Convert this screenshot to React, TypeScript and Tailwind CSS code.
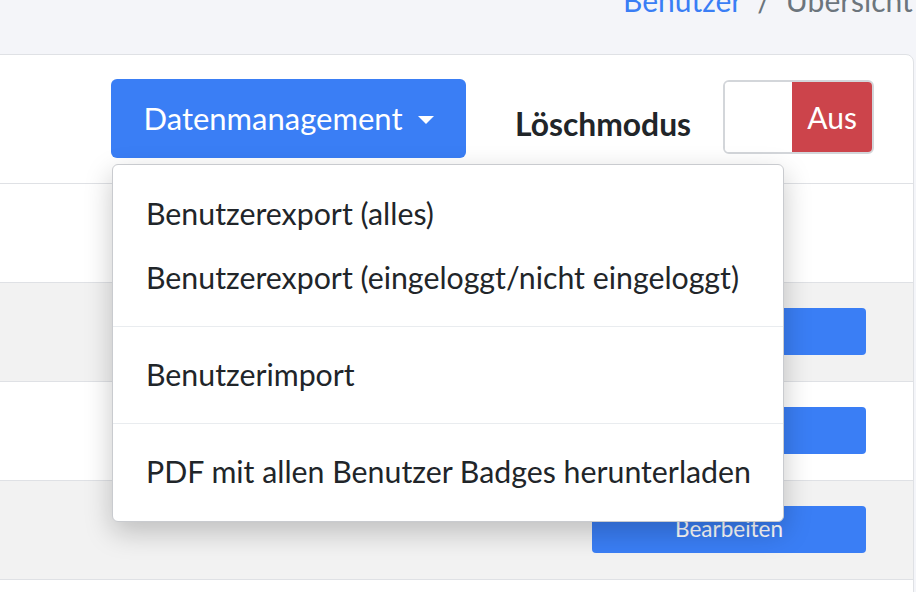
import { useState } from "react";

const rows = [
  { shaded: false, button: false },
  { shaded: true, button: true },
  { shaded: false, button: true },
  { shaded: true, button: true },
  { shaded: false, button: false },
];

const items = [
  ["Benutzerexport (alles)", "Benutzerexport (eingeloggt/nicht eingeloggt)"],
  ["Benutzerimport"],
  ["PDF mit allen Benutzer Badges herunterladen"],
];

export default function App() {
  const [open] = useState(true);

  return (
    <div
      className="relative h-[592px] w-[916px] overflow-hidden bg-[#f4f5f9] text-[#212529]"
      style={{ fontFamily: "Lato, 'Open Sans', sans-serif" }}
    >
      {/* Breadcrumb */}
      <div className="h-[54px] overflow-hidden">
        <div className="-mt-[20px] flex items-center gap-[15px] pl-[623px] text-[30px] leading-[40px] whitespace-nowrap">
          <span className="text-[#3a7ef5]">Benutzer</span>
          <span className="text-[#6c757d]">/</span>
          <span className="text-[#6c757d]">Übersicht</span>
        </div>
      </div>

      {/* Card */}
      <div className="-ml-[10px] mr-[2px] flex flex-col rounded-tr-[8px] border border-[#dfe1e5] bg-white">
        <div className="flex h-[129px] items-start border-b border-[#dfe1e5] pt-[24px] pl-[120px]">
          <button className="flex h-[79px] w-[355px] items-center justify-center gap-[15px] rounded-[6px] bg-[#3a7ef5] text-[31px] text-white">
            Datenmanagement
            <span className="mt-[2px] h-0 w-0 border-x-[8px] border-t-[8px] border-x-transparent border-t-white" />
          </button>
          <span className="ml-[49px] mt-[22px] text-[31.8px] font-bold">Löschmodus</span>
          <div className="ml-[32px] mt-[1px] flex h-[74px] w-[151px] overflow-hidden rounded-[6px] border-2 border-[#d3d6da]">
            <div className="w-[67px] bg-white" />
            <div className="flex flex-1 items-center justify-center bg-[#cc444b] text-[30px] text-white">
              Aus
            </div>
          </div>
        </div>

        {rows.map((r, i) => (
          <div
            key={i}
            className={`flex h-[99px] items-center justify-end border-b border-[#dfe1e5] pr-[47px] ${
              r.shaded ? "bg-[#f2f2f2]" : "bg-white"
            }`}
          >
            {r.button && (
              <button className="-mt-[2px] flex h-[47px] w-[274px] items-center justify-center rounded-[4px] bg-[#3a7ef5] text-[22.5px] text-white">
                Bearbeiten
              </button>
            )}
          </div>
        ))}
      </div>

      {/* Dropdown menu */}
      {open && (
        <div className="absolute top-[164px] left-[112px] w-[672px] rounded-[6px] border border-[#c9cbcf] bg-white py-[17px] shadow-[0_10px_28px_rgba(0,0,0,0.22)]">
          {items.map((group, gi) => (
            <div key={gi}>
              {gi > 0 && <div className="my-[16px] h-px bg-[#e9ecef]" />}
              {group.map((label) => (
                <div
                  key={label}
                  className="flex h-[64px] items-center px-[33px] text-[30.3px] whitespace-nowrap"
                >
                  {label}
                </div>
              ))}
            </div>
          ))}
        </div>
      )}
    </div>
  );
}
